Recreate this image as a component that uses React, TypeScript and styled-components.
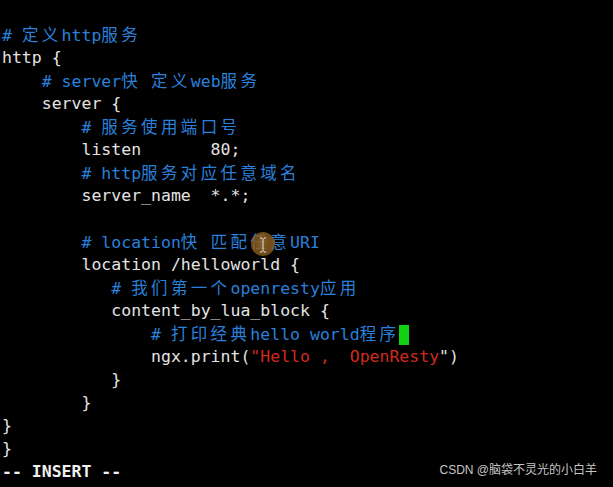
import React from "react";
import styled, { createGlobalStyle } from "styled-components";

const Global = createGlobalStyle`
  html, body { margin: 0; padding: 0; background: #000; }
  body { width: 613px; height: 487px; overflow: hidden; }
`;

const Terminal = styled.div`
  position: relative;
  width: 613px;
  height: 487px;
  box-sizing: border-box;
  padding: 23px 0 0 2px;
  background: #000;
  font-family: "DejaVu Sans Mono", "Liberation Mono", monospace;
  font-size: 16.5px;
  letter-spacing: 0;
  color: #e4e4e4;
`;

const Line = styled.div`
  height: 23px;
  line-height: 23px;
  white-space: pre;
`;

type Kind = "plain" | "comment" | "string";
const colors: Record<Kind, string> = {
  plain: "#e4e4e4",
  comment: "#2a80dc",
  string: "#d12a1f",
};

const Tok = styled.span<{ $kind: Kind }>`
  color: ${(p) => colors[p.$kind]};
`;

const Cjk = styled.span`
  font-family: "Noto Sans CJK SC", sans-serif;
  font-size: 16.5px;
  letter-spacing: 3.36px;
`;

const Cursor = styled.span`
  display: inline-block;
  width: 10px;
  height: 20px;
  background: #12d112;
  vertical-align: -5px;
`;

const StatusLine = styled.div`
  display: flex;
  justify-content: space-between;
  align-items: center;
  height: 23px;
  line-height: 23px;
  padding-right: 16px;
`;

const Mode = styled.span`
  font-weight: bold;
  white-space: pre;
  color: #f0f0f0;
`;

const Watermark = styled.span`
  font-family: "Liberation Sans", "Noto Sans CJK SC", sans-serif;
  font-size: 12px;
  letter-spacing: 0;
  color: #c4c4c4;
  margin-top: -2px;
`;

const MouseHalo = styled.div`
  position: absolute;
  left: 251px;
  top: 232px;
  width: 24px;
  height: 24px;
  border-radius: 50%;
  background: radial-gradient(circle, rgba(150, 100, 32, 0.85) 0%, rgba(135, 90, 30, 0.8) 70%, rgba(110, 72, 22, 0.5) 100%);
`;

const IBeam = styled.svg`
  position: absolute;
  left: 259px;
  top: 237px;
`;

function Txt({ text, kind = "plain" }: { text: string; kind?: Kind }) {
  const parts = text.split(/([\u4e00-\u9fff]+)/).filter((s) => s.length > 0);
  return (
    <Tok $kind={kind}>
      {parts.map((p, i) =>
        /[\u4e00-\u9fff]/.test(p) ? <Cjk key={i}>{p}</Cjk> : <React.Fragment key={i}>{p}</React.Fragment>
      )}
    </Tok>
  );
}

const pad = (n: number) => " ".repeat(n);

export default function App() {
  return (
    <>
      <Global />
      <Terminal>
        <Line><Txt kind="comment" text="# 定义http服务" /></Line>
        <Line><Txt text="http {" /></Line>
        <Line>{pad(4)}<Txt kind="comment" text="# server快 定义web服务" /></Line>
        <Line>{pad(4)}<Txt text="server {" /></Line>
        <Line>{pad(8)}<Txt kind="comment" text="# 服务使用端口号" /></Line>
        <Line>{pad(8)}<Txt text="listen       80;" /></Line>
        <Line>{pad(8)}<Txt kind="comment" text="# http服务对应任意域名" /></Line>
        <Line>{pad(8)}<Txt text="server_name  *.*;" /></Line>
        <Line> </Line>
        <Line>{pad(8)}<Txt kind="comment" text="# location快 匹配任意URI" /></Line>
        <Line>{pad(8)}<Txt text="location /helloworld {" /></Line>
        <Line>{pad(11)}<Txt kind="comment" text="# 我们第一个openresty应用" /></Line>
        <Line>{pad(11)}<Txt text="content_by_lua_block {" /></Line>
        <Line>{pad(15)}<Txt kind="comment" text="# 打印经典hello world程序" /><Cursor /></Line>
        <Line>
          {pad(15)}<Txt text="ngx.print(" /><Txt kind="string" text={'"Hello ,  OpenResty'} /><Txt text={'")'} />
        </Line>
        <Line>{pad(11)}<Txt text="}" /></Line>
        <Line>{pad(8)}<Txt text="}" /></Line>
        <Line><Txt text="}" /></Line>
        <Line><Txt text="}" /></Line>
        <StatusLine>
          <Mode>-- INSERT --</Mode>
          <Watermark>CSDN @脑袋不灵光的小白羊</Watermark>
        </StatusLine>
        <MouseHalo />
        <IBeam width="8" height="16" viewBox="0 0 8 16">
          <path d="M1 1h2M5 1h2M4 1v14M1 15h2M5 15h2" stroke="#e8e8e8" strokeWidth="1" fill="none" />
        </IBeam>
      </Terminal>
    </>
  );
}
